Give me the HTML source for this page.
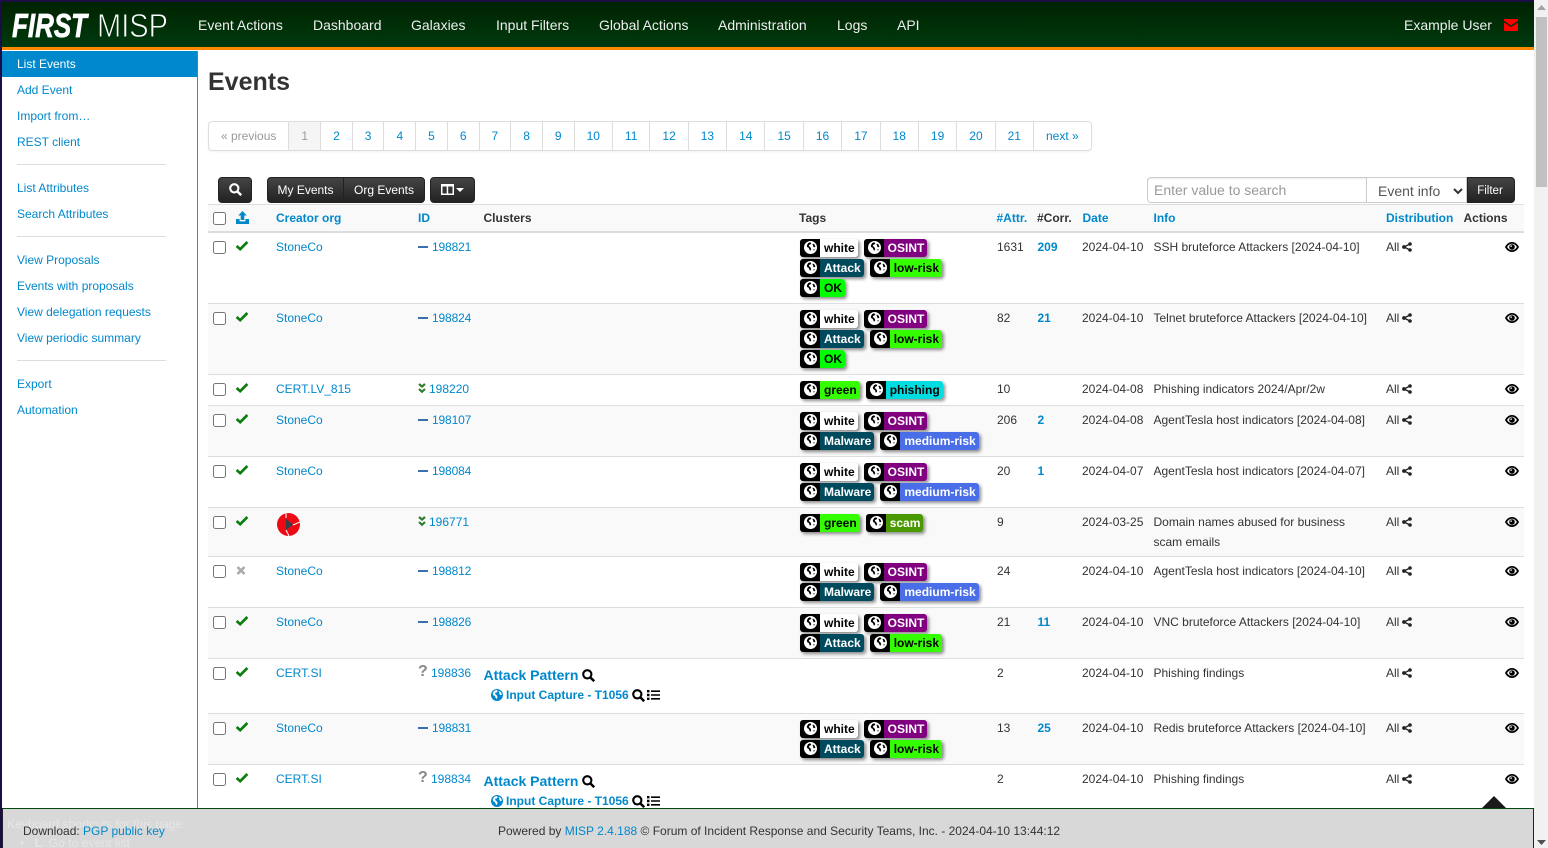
<!DOCTYPE html>
<html lang="en"><head><meta charset="utf-8"><title>Events</title>
<style>
*{box-sizing:border-box}
html,body{margin:0;padding:0;width:1548px;height:848px;overflow:hidden;background:#fff}
body{font:12px/20px "Liberation Sans",Arial,sans-serif;color:#333;position:relative}
a{color:#0088cc;text-decoration:none}
.abs,.r,.c{position:absolute}
#top{left:0;top:0;width:1548px;height:2px;background:#1b0d45}
#lft{left:0;top:0;width:2px;height:848px;background:#1b0d45}
#nav{left:2px;top:2px;width:1532px;height:45px;background:linear-gradient(#002200,#003a0e)}
#org{left:2px;top:47px;width:1532px;height:3px;background:#ff8800}
.n{position:absolute;top:15px;font-size:14px;line-height:20px;color:#eee;white-space:nowrap}
#side{left:2px;top:51px;width:196px;height:757px;border-right:1px solid #777;background:#fff}
.s{position:absolute;left:15px;line-height:20px;white-space:nowrap}
#act{left:0;top:0;width:195px;height:26px;background:#0088cc}
.dv{position:absolute;left:15px;width:149px;height:1px;background:#ddd}
h2{position:absolute;left:208px;top:66px;margin:0;font-size:25px;line-height:32px;font-weight:bold;color:#333}
#pg{left:208px;top:121px;height:30px;display:flex;border:1px solid #ddd;border-radius:4px;box-shadow:0 1px 2px rgba(0,0,0,.05);line-height:28px;background:#fff}
#pg a,#pg span{padding:0 12px;border-left:1px solid #ddd;display:block}
#pg span:first-child{border-left:0;color:#999}
#pg .cur{background:#f5f5f5;color:#999}
.b{position:absolute;top:177px;height:26px;background:linear-gradient(#444,#222);border:1px solid #222;border-radius:4px;color:#fff;line-height:24px;text-align:center;white-space:nowrap}
#ipt{left:1147px;top:177px;width:220px;height:26px;border:1px solid #ccc;border-radius:4px 0 0 4px;font-size:14px;line-height:24px;color:#999;padding-left:6px;box-shadow:inset 0 1px 1px rgba(0,0,0,.075)}
#sel{left:1367px;top:177px;width:100px;height:26px;border:1px solid #ccc;border-left:0;font-size:14px;line-height:26px;color:#555;padding-left:11px;background:#fff}
#hd{left:208px;top:204px;width:1316px;height:29px;background:#f9f9f9;border-top:1px solid #ddd;border-bottom:2px solid #ddd}
#hd .c{top:3px;font-weight:bold;white-space:nowrap}
.r{left:208px;width:1316px;border-top:1px solid #ddd}
.g{background:#f9f9f9}
.c{top:4px;white-space:nowrap}
input{position:absolute;margin:0;width:13px;height:13px;left:5px;top:8px}
.k{left:28px;top:7px;width:12px;height:12px}
.o{left:68px}.i{left:224px;letter-spacing:-.15px}.at{left:789px}.co{left:829.5px;font-weight:bold}.d{left:874px}.f{left:945.5px}.ds{left:1178px}
.mn{position:absolute;left:210px;top:13px;width:10px;height:2px;background:#3a6fb0}
.ch{position:absolute;left:210px;top:8px;width:8px;height:11px}
.q{position:absolute;left:210px;top:3px;font-weight:bold;font-size:16px;color:#888}
.sh{position:absolute;left:1194px;top:9px;width:10px;height:10px}
.ey{position:absolute;left:1297px;top:7.500px;width:14px;height:12px}
.tg{position:absolute;left:592px;top:6px;white-space:nowrap;line-height:0}
.t{display:inline-block;height:18px;margin:0 6px 2px 0;border-radius:3px;box-shadow:2px 2px 3px rgba(0,0,0,.45);overflow:hidden;font-size:12px;font-weight:bold;line-height:18px;vertical-align:top}
.t i{display:inline-block;width:20px;height:18px;background:#000;vertical-align:top;padding:2px 0 0 4px}
.t i svg{display:block;width:13px;height:13px}
.t b{display:inline-block;height:18px;padding:0 3px 0 4px;vertical-align:top}
.w{background:#fff;color:#000}.os{background:#800080;color:#fff}.ma{background:#004a5e;color:#fff}.lr{background:#33ff00;color:#000}.ok{background:#00ff00;color:#000}.ph{background:#00dde0;color:#000}.mr{background:#4a6ee8;color:#fff}.sc{background:#4a9900;color:#fff}
.cl{left:275.5px;top:6px;font-size:14px;font-weight:bold;color:#0088cc}
.cs{left:298px;top:26px;font-size:12px;font-weight:bold;color:#0088cc}
.ic{position:absolute}
#ft{left:2px;top:808px;width:1532px;height:40px;background:#d8d8d8;border-top:1px solid #004a10;border-right:1px solid #222;border-left:1px solid #222;overflow:hidden}
#sb{left:1534px;top:0;width:14px;height:848px;background:#f1f1f1}
</style></head><body>
<svg width="0" height="0" style="position:absolute">
<symbol id="g" viewBox="0 0 16 16"><circle cx="8" cy="8" r="8" fill="#fff"/><path fill="#000" d="M5 2.600l2.400-1 1.600 1-1 1.600-1.600.5-.5 1.500 1.800 1.400 1.200 2.400-1.400 2.200-1-2-.7-1.800-1.800-.8-.6-1.900zM11 3l2 1.500 1 2.500-1.800.8-1.200-1.600.4-1.200-1-.9zM11.400 10.400l1.800-.5-.9 2.200z"/></symbol>
<symbol id="gb" viewBox="0 0 16 16"><circle cx="8" cy="8" r="8" fill="#0088cc"/><path fill="#fff" d="M4 2.600l3-1.200 2 1-1 2-2 .5-.6 1.600 2 1.600 1.400 2.800-1.600 2.600-1.200-2.200-.8-2-2.200-1-.8-2.200zM10.400 2.400l3 2 1.200 3-2 1-1.600-2 .5-1.500-1.200-1z"/></symbol>
<symbol id="ck" viewBox="0 0 12 12"><path d="M.6 6l3.600 3.200L11.400 2" fill="none" stroke="#0a7d0a" stroke-width="2.700"/></symbol>
<symbol id="xx" viewBox="0 0 12 12"><path d="M1.500 3l7 7M8.500 3l-7 7" fill="none" stroke="#aaa" stroke-width="2.600"/></symbol>
<symbol id="ey" viewBox="0 0 14 12"><path fill="#000" fill-rule="evenodd" d="M7 1C3.800 1 1.300 3.300 0 6c1.300 2.700 3.800 5 7 5s5.700-2.300 7-5c-1.300-2.700-3.800-5-7-5zM7 2.800c2 0 3.800 1.300 4.900 3.200C10.800 7.900 9 9.200 7 9.200S3.200 7.900 2.100 6C3.200 4.100 5 2.800 7 2.800z"/><circle cx="7" cy="6" r="2.800" fill="#000"/><circle cx="6.100" cy="5.100" r=".8" fill="#fff"/></symbol>
<symbol id="sh" viewBox="0 0 10 10"><path d="M8 2L2 5l6 3" fill="none" stroke="#222" stroke-width="1.400"/><circle cx="8" cy="2" r="1.800" fill="#222"/><circle cx="2" cy="5" r="1.900" fill="#222"/><circle cx="8" cy="8" r="1.800" fill="#222"/></symbol>
<symbol id="se" viewBox="0 0 13 13"><circle cx="5.300" cy="5.300" r="4.100" fill="none" stroke="currentColor" stroke-width="2.100"/><path d="M8.200 8.200l4 4" stroke="currentColor" stroke-width="2.500" fill="none"/></symbol>
<symbol id="li" viewBox="0 0 13 12"><path fill="#000" d="M0 1h2.500v2.400H0zM4 1.400h9v1.600H4zM0 4.800h2.500v2.400H0zM4 5.200h9v1.600H4zM0 8.600h2.500V11H0zM4 9h9v1.600H4z"/></symbol>
<symbol id="ch" viewBox="0 0 8 11"><path d="M1 1l3 2.600L7 1M1 6l3 2.800L7 6" fill="none" stroke="#2f7d2f" stroke-width="2.200"/></symbol>
</svg>
<div class="abs" id="nav"></div><div class="abs" id="org"></div>
<div class="abs" id="top"></div><div class="abs" id="lft"></div>
<svg class="abs" style="left:0;top:0" width="190" height="47"><text x="12" y="37" font-family="Liberation Sans" font-size="33" font-weight="bold" font-style="italic" fill="#fff" stroke="#fff" stroke-width=".7" textLength="75" lengthAdjust="spacingAndGlyphs">FIRST</text><text x="97" y="37" font-family="Liberation Sans" font-size="33" fill="#fff" stroke="#002e08" stroke-width=".9" textLength="71" lengthAdjust="spacingAndGlyphs">MISP</text></svg>
<span class="n" style="left:198px">Event Actions</span><span class="n" style="left:313px">Dashboard</span><span class="n" style="left:411px">Galaxies</span><span class="n" style="left:496px">Input Filters</span><span class="n" style="left:599px">Global Actions</span><span class="n" style="left:718px">Administration</span><span class="n" style="left:837px">Logs</span><span class="n" style="left:897px">API</span><span class="n" style="left:1404px">Example User</span>
<svg class="abs" style="left:1504px;top:19px" width="14" height="12"><path fill="#f00" d="M0 0h14v1.800L7 6.500 0 1.800zM0 3.500L7 8l7-4.500V12H0z"/></svg>
<div class="abs" id="side">
<div class="abs" id="act"></div>
<a class="s" style="top:3px;color:#fff">List Events</a>
<a class="s" style="top:29px">Add Event</a>
<a class="s" style="top:55px">Import from…</a>
<a class="s" style="top:81px">REST client</a>
<div class="dv" style="top:113px"></div>
<a class="s" style="top:127px">List Attributes</a>
<a class="s" style="top:153px">Search Attributes</a>
<div class="dv" style="top:185px"></div>
<a class="s" style="top:199px">View Proposals</a>
<a class="s" style="top:225px">Events with proposals</a>
<a class="s" style="top:251px">View delegation requests</a>
<a class="s" style="top:277px">View periodic summary</a>
<div class="dv" style="top:309px"></div>
<a class="s" style="top:323px">Export</a>
<a class="s" style="top:349px">Automation</a>
</div>
<h2>Events</h2>
<div class="abs" id="pg"><span>« previous</span><a class="cur">1</a><a>2</a><a>3</a><a>4</a><a>5</a><a>6</a><a>7</a><a>8</a><a>9</a><a>10</a><a>11</a><a>12</a><a>13</a><a>14</a><a>15</a><a>16</a><a>17</a><a>18</a><a>19</a><a>20</a><a>21</a><a>next »</a></div>
<div class="b" style="left:218px;width:34px"><svg style="margin-top:5px;color:#fff" width="13" height="13"><use href="#se"/></svg></div>
<div class="b" style="left:267px;width:77px;border-radius:4px 0 0 4px">My Events</div>
<div class="b" style="left:343px;width:82px;border-radius:0 4px 4px 0">Org Events</div>
<div class="b" style="left:430px;width:45px"><svg style="position:absolute;left:10px;top:6px" width="24" height="12"><path fill="#fff" fill-rule="evenodd" d="M0 0h13v11H0zM1.500 2.500v7h4.200v-7zM7.200 2.500v7h4.300v-7z"/><path fill="#fff" d="M15 4h8l-4 4z"/></svg></div>
<div class="abs" id="ipt">Enter value to search</div>
<div class="abs" id="sel">Event info<svg style="position:absolute;left:86px;top:10px" width="10" height="7"><path d="M1 1l4 4 4-4" fill="none" stroke="#333" stroke-width="2"/></svg></div>
<div class="b" style="left:1467px;width:48px;border-radius:0 4px 4px 0;font-size:11.500px;line-height:26px;padding-right:2px">Filter</div>

<div class="abs" id="hd">
<input type="checkbox" style="top:7px">
<svg class="ic" style="left:28px;top:6px" width="13" height="14"><path fill="#0088cc" d="M6.500 0l4.300 4.500H8.300V9H4.700V4.500H2.200zM0 8h3.600v2.400h5.800V8H13v5H0z"/></svg>
<a class="c" style="left:68px">Creator org</a><a class="c" style="left:210px">ID</a><span class="c" style="left:275.5px">Clusters</span><span class="c" style="left:591px">Tags</span><a class="c" style="left:788.5px">#Attr.</a><span class="c" style="left:829px">#Corr.</span><a class="c" style="left:874.5px">Date</a><a class="c" style="left:945.5px">Info</a><a class="c" style="left:1178px">Distribution</a><span class="c" style="left:1255.5px">Actions</span>
</div>

<div class="r" style="top:232px;height:71px"><input type="checkbox"><svg class="abs k"><use href="#ck"/></svg><a class="c o">StoneCo</a><i class="mn"></i><a class="c i">198821</a>
<div class="tg"><span class="t"><i><svg><use href="#g"/></svg></i><b class="w">white</b></span><span class="t"><i><svg><use href="#g"/></svg></i><b class="os">OSINT</b></span><br><span class="t"><i><svg><use href="#g"/></svg></i><b class="ma">Attack</b></span><span class="t"><i><svg><use href="#g"/></svg></i><b class="lr">low-risk</b></span><br><span class="t"><i><svg><use href="#g"/></svg></i><b class="ok">OK</b></span></div>
<span class="c at">1631</span><a class="c co">209</a><span class="c d">2024-04-10</span><span class="c f">SSH bruteforce Attackers [2024-04-10]</span><span class="c ds">All</span><svg class="sh"><use href="#sh"/></svg><svg class="ey"><use href="#ey"/></svg></div>

<div class="r g" style="top:303px;height:71px"><input type="checkbox"><svg class="abs k"><use href="#ck"/></svg><a class="c o">StoneCo</a><i class="mn"></i><a class="c i">198824</a>
<div class="tg"><span class="t"><i><svg><use href="#g"/></svg></i><b class="w">white</b></span><span class="t"><i><svg><use href="#g"/></svg></i><b class="os">OSINT</b></span><br><span class="t"><i><svg><use href="#g"/></svg></i><b class="ma">Attack</b></span><span class="t"><i><svg><use href="#g"/></svg></i><b class="lr">low-risk</b></span><br><span class="t"><i><svg><use href="#g"/></svg></i><b class="ok">OK</b></span></div>
<span class="c at">82</span><a class="c co">21</a><span class="c d">2024-04-10</span><span class="c f">Telnet bruteforce Attackers [2024-04-10]</span><span class="c ds">All</span><svg class="sh"><use href="#sh"/></svg><svg class="ey"><use href="#ey"/></svg></div>

<div class="r" style="top:374px;height:31px"><input type="checkbox"><svg class="abs k"><use href="#ck"/></svg><a class="c o">CERT.LV_815</a><svg class="ch"><use href="#ch"/></svg><a class="c" style="left:221px">198220</a>
<div class="tg"><span class="t"><i><svg><use href="#g"/></svg></i><b class="lr">green</b></span><span class="t"><i><svg><use href="#g"/></svg></i><b class="ph">phishing</b></span></div>
<span class="c at">10</span><span class="c d">2024-04-08</span><span class="c f">Phishing indicators 2024/Apr/2w</span><span class="c ds">All</span><svg class="sh"><use href="#sh"/></svg><svg class="ey"><use href="#ey"/></svg></div>

<div class="r g" style="top:405px;height:51px"><input type="checkbox"><svg class="abs k"><use href="#ck"/></svg><a class="c o">StoneCo</a><i class="mn"></i><a class="c i">198107</a>
<div class="tg"><span class="t"><i><svg><use href="#g"/></svg></i><b class="w">white</b></span><span class="t"><i><svg><use href="#g"/></svg></i><b class="os">OSINT</b></span><br><span class="t"><i><svg><use href="#g"/></svg></i><b class="ma">Malware</b></span><span class="t"><i><svg><use href="#g"/></svg></i><b class="mr">medium-risk</b></span></div>
<span class="c at">206</span><a class="c co">2</a><span class="c d">2024-04-08</span><span class="c f">AgentTesla host indicators [2024-04-08]</span><span class="c ds">All</span><svg class="sh"><use href="#sh"/></svg><svg class="ey"><use href="#ey"/></svg></div>

<div class="r" style="top:456px;height:51px"><input type="checkbox"><svg class="abs k"><use href="#ck"/></svg><a class="c o">StoneCo</a><i class="mn"></i><a class="c i">198084</a>
<div class="tg"><span class="t"><i><svg><use href="#g"/></svg></i><b class="w">white</b></span><span class="t"><i><svg><use href="#g"/></svg></i><b class="os">OSINT</b></span><br><span class="t"><i><svg><use href="#g"/></svg></i><b class="ma">Malware</b></span><span class="t"><i><svg><use href="#g"/></svg></i><b class="mr">medium-risk</b></span></div>
<span class="c at">20</span><a class="c co">1</a><span class="c d">2024-04-07</span><span class="c f">AgentTesla host indicators [2024-04-07]</span><span class="c ds">All</span><svg class="sh"><use href="#sh"/></svg><svg class="ey"><use href="#ey"/></svg></div>

<div class="r g" style="top:507px;height:49px"><input type="checkbox"><svg class="abs k"><use href="#ck"/></svg>
<svg class="ic" style="left:69px;top:5px" width="23" height="23" viewBox="0 0 23 23"><circle cx="11.500" cy="11.500" r="11.500" fill="#ee0a14"/><path d="M9 6l7 5.500L9 17z" fill="#33404a"/><path d="M9 5V0M16 12l7-3M9 17l3 6" stroke="#fff" stroke-width="1"/></svg>
<svg class="ch"><use href="#ch"/></svg><a class="c" style="left:221px">196771</a>
<div class="tg"><span class="t"><i><svg><use href="#g"/></svg></i><b class="lr">green</b></span><span class="t"><i><svg><use href="#g"/></svg></i><b class="sc">scam</b></span></div>
<span class="c at">9</span><span class="c d">2024-03-25</span><span class="c f">Domain names abused for business<br>scam emails</span><span class="c ds">All</span><svg class="sh"><use href="#sh"/></svg><svg class="ey"><use href="#ey"/></svg></div>

<div class="r" style="top:556px;height:51px"><input type="checkbox"><svg class="abs k"><use href="#xx"/></svg><a class="c o">StoneCo</a><i class="mn"></i><a class="c i">198812</a>
<div class="tg"><span class="t"><i><svg><use href="#g"/></svg></i><b class="w">white</b></span><span class="t"><i><svg><use href="#g"/></svg></i><b class="os">OSINT</b></span><br><span class="t"><i><svg><use href="#g"/></svg></i><b class="ma">Malware</b></span><span class="t"><i><svg><use href="#g"/></svg></i><b class="mr">medium-risk</b></span></div>
<span class="c at">24</span><span class="c d">2024-04-10</span><span class="c f">AgentTesla host indicators [2024-04-10]</span><span class="c ds">All</span><svg class="sh"><use href="#sh"/></svg><svg class="ey"><use href="#ey"/></svg></div>

<div class="r g" style="top:607px;height:51px"><input type="checkbox"><svg class="abs k"><use href="#ck"/></svg><a class="c o">StoneCo</a><i class="mn"></i><a class="c i">198826</a>
<div class="tg"><span class="t"><i><svg><use href="#g"/></svg></i><b class="w">white</b></span><span class="t"><i><svg><use href="#g"/></svg></i><b class="os">OSINT</b></span><br><span class="t"><i><svg><use href="#g"/></svg></i><b class="ma">Attack</b></span><span class="t"><i><svg><use href="#g"/></svg></i><b class="lr">low-risk</b></span></div>
<span class="c at">21</span><a class="c co">11</a><span class="c d">2024-04-10</span><span class="c f">VNC bruteforce Attackers [2024-04-10]</span><span class="c ds">All</span><svg class="sh"><use href="#sh"/></svg><svg class="ey"><use href="#ey"/></svg></div>

<div class="r" style="top:658px;height:55px"><input type="checkbox"><svg class="abs k"><use href="#ck"/></svg><a class="c o">CERT.SI</a><span class="q">?</span><a class="c" style="left:223px">198836</a>
<a class="c cl">Attack Pattern</a><svg class="ic" style="left:374px;top:10px;color:#000" width="13" height="13"><use href="#se"/></svg>
<svg class="ic" style="left:283px;top:30px" width="12" height="12"><use href="#gb"/></svg><a class="c cs">Input Capture - T1056</a><svg class="ic" style="left:424px;top:30px;color:#000" width="13" height="13"><use href="#se"/></svg><svg class="ic" style="left:439px;top:30px" width="13" height="12"><use href="#li"/></svg>
<span class="c at">2</span><span class="c d">2024-04-10</span><span class="c f">Phishing findings</span><span class="c ds">All</span><svg class="sh"><use href="#sh"/></svg><svg class="ey"><use href="#ey"/></svg></div>

<div class="r g" style="top:713px;height:51px"><input type="checkbox"><svg class="abs k"><use href="#ck"/></svg><a class="c o">StoneCo</a><i class="mn"></i><a class="c i">198831</a>
<div class="tg"><span class="t"><i><svg><use href="#g"/></svg></i><b class="w">white</b></span><span class="t"><i><svg><use href="#g"/></svg></i><b class="os">OSINT</b></span><br><span class="t"><i><svg><use href="#g"/></svg></i><b class="ma">Attack</b></span><span class="t"><i><svg><use href="#g"/></svg></i><b class="lr">low-risk</b></span></div>
<span class="c at">13</span><a class="c co">25</a><span class="c d">2024-04-10</span><span class="c f">Redis bruteforce Attackers [2024-04-10]</span><span class="c ds">All</span><svg class="sh"><use href="#sh"/></svg><svg class="ey"><use href="#ey"/></svg></div>

<div class="r" style="top:764px;height:55px"><input type="checkbox"><svg class="abs k"><use href="#ck"/></svg><a class="c o">CERT.SI</a><span class="q">?</span><a class="c" style="left:223px">198834</a>
<a class="c cl">Attack Pattern</a><svg class="ic" style="left:374px;top:10px;color:#000" width="13" height="13"><use href="#se"/></svg>
<svg class="ic" style="left:283px;top:30px" width="12" height="12"><use href="#gb"/></svg><a class="c cs">Input Capture - T1056</a><svg class="ic" style="left:424px;top:30px;color:#000" width="13" height="13"><use href="#se"/></svg><svg class="ic" style="left:439px;top:30px" width="13" height="12"><use href="#li"/></svg>
<span class="c at">2</span><span class="c d">2024-04-10</span><span class="c f">Phishing findings</span><span class="c ds">All</span><svg class="sh"><use href="#sh"/></svg><svg class="ey"><use href="#ey"/></svg></div>

<svg class="abs" style="left:1482px;top:796px" width="24" height="12"><path fill="#1a1a1a" d="M12 0l12 12H0z"/></svg>
<div class="abs" id="ft">
<span class="abs" style="left:4px;top:5px;font-size:12.200px;color:#e6e6e6;white-space:nowrap">Keyboard shortcuts for this page:</span>
<span class="abs" style="left:17px;top:24px;font-size:12.200px;color:#e6e6e6;white-space:nowrap">•&nbsp;&nbsp;&nbsp;<b>L</b>: Go to event list</span>
<span class="abs" style="left:20px;top:12px;white-space:nowrap;font-size:12px">Download: <a>PGP public key</a></span>
<span class="abs" style="left:495px;top:12px;white-space:nowrap;font-size:12px">Powered by <a>MISP 2.4.188</a> © Forum of Incident Response and Security Teams, Inc. - 2024-04-10 13:44:12</span>
</div>
<div class="abs" id="sb">
<div class="abs" style="left:2px;top:17px;width:11px;height:170px;background:#c1c1c1"></div>
<svg class="abs" style="left:3px;top:5px" width="9" height="6"><path fill="#a3a3a3" d="M4.500 0L9 5H0z"/></svg>
<svg class="abs" style="left:3px;top:840px" width="9" height="6"><path fill="#505050" d="M0 0h9L4.500 5z"/></svg>
</div>
</body></html>
